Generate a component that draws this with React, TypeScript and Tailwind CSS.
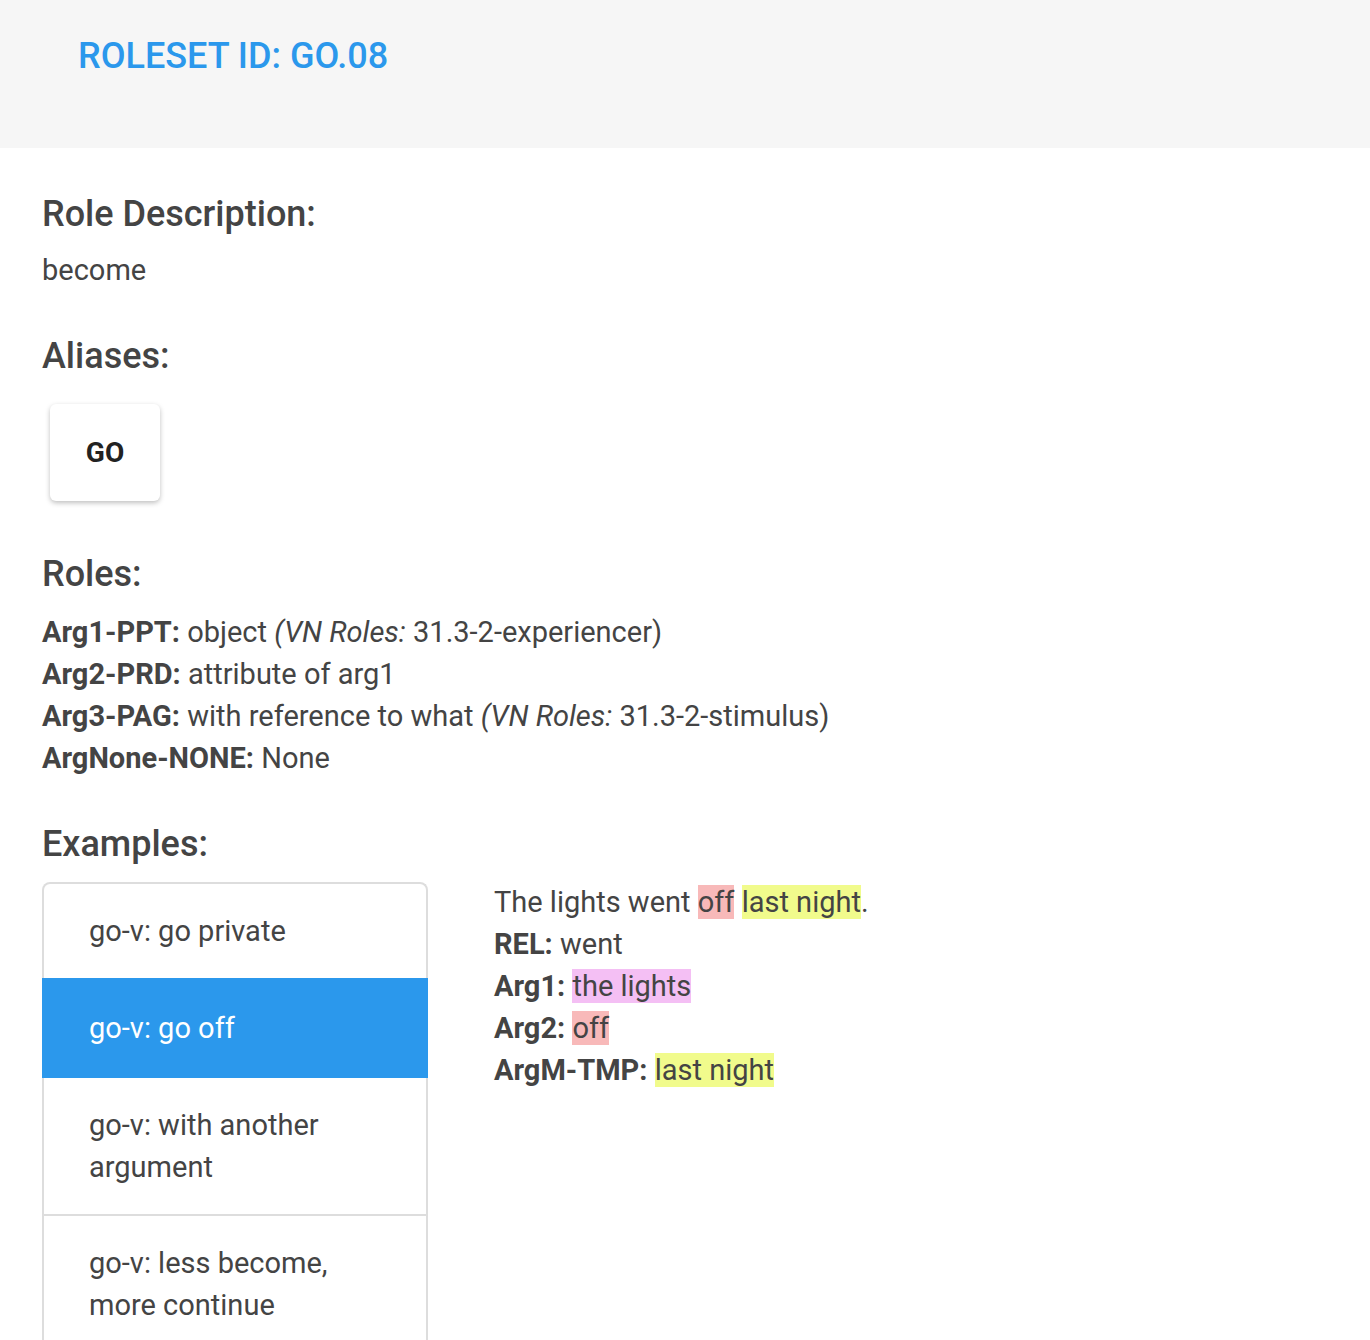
const roles = [
  { arg: "Arg1-PPT", desc: "object", vn: "31.3-2-experiencer" },
  { arg: "Arg2-PRD", desc: "attribute of arg1" },
  { arg: "Arg3-PAG", desc: "with reference to what", vn: "31.3-2-stimulus" },
  { arg: "ArgNone-NONE", desc: "None" },
];

const examples = [
  "go-v: go private",
  "go-v: go off",
  "go-v: with another argument",
  "go-v: less become, more continue",
];

function Heading({ children }: { children: React.ReactNode }) {
  return (
    <h5 className="text-[36px] font-medium leading-[38px] text-[#444]">
      {children}
    </h5>
  );
}

export default function App() {
  const active = 1;
  return (
    <div className="min-h-[1340px] bg-white font-['Roboto',sans-serif] text-[#444]">
      <header className="h-[148px] bg-[#f6f6f6] pl-[78px] pt-[35px]">
        <h1 className="text-[36px] font-medium leading-[42px] text-[#2b98ec]">
          ROLESET ID: GO.08
        </h1>
      </header>

      <main className="px-[42px] pt-[47px]">
        <Heading>Role Description:</Heading>
        <p className="mt-[16px] text-[29px] leading-[42px]">become</p>

        <div className="mt-[46px]">
          <Heading>Aliases:</Heading>
        </div>
        <div className="mt-[29px] flex pl-[8px]">
          <button className="flex h-[97px] w-[110px] items-center justify-center rounded-[6px] bg-white text-[28px] font-bold text-[#222] shadow-[0_2px_5px_rgba(0,0,0,0.25)]">
            GO
          </button>
        </div>

        <div className="mt-[54px]">
          <Heading>Roles:</Heading>
        </div>
        <ul className="mt-[18px] text-[29px] leading-[42px]">
          {roles.map((r) => (
            <li key={r.arg}>
              <span className="font-bold">{r.arg}:</span> {r.desc}
              {r.vn && (
                <>
                  {" "}
                  <i>(VN Roles:</i> {r.vn})
                </>
              )}
            </li>
          ))}
        </ul>

        <div className="mt-[46px]">
          <Heading>Examples:</Heading>
        </div>

        <div className="mt-[19px] flex items-start gap-[66px]">
          <div className="w-[386px] rounded-t-[8px] border-2 border-b-0 border-[#ddd]">
            {examples.map((ex, i) => (
              <div
                key={ex}
                className={
                  i === active
                    ? "relative -mx-[2px] -mt-[2px] bg-[#2b98ec] px-[47px] pb-[29px] pt-[29px] text-[29px] leading-[42px] text-white"
                    : "border-b-2 border-[#ddd] px-[45px] py-[26px] text-[29px] leading-[42px] text-[#444]"
                }
              >
                {ex}
              </div>
            ))}
          </div>

          <div className="-mt-[1px] text-[29px] leading-[42px]">
            <p>
              The lights went <span className="bg-[#f8b9b9]">off</span>{" "}
              <span className="bg-[#f1fb8c]">last night</span>.
            </p>
            <p>
              <span className="font-bold">REL:</span> went
            </p>
            <p>
              <span className="font-bold">Arg1:</span>{" "}
              <span className="bg-[#f4bff4]">the lights</span>
            </p>
            <p>
              <span className="font-bold">Arg2:</span>{" "}
              <span className="bg-[#f8b9b9]">off</span>
            </p>
            <p>
              <span className="font-bold">ArgM-TMP:</span>{" "}
              <span className="bg-[#f1fb8c]">last night</span>
            </p>
          </div>
        </div>
      </main>
    </div>
  );
}
